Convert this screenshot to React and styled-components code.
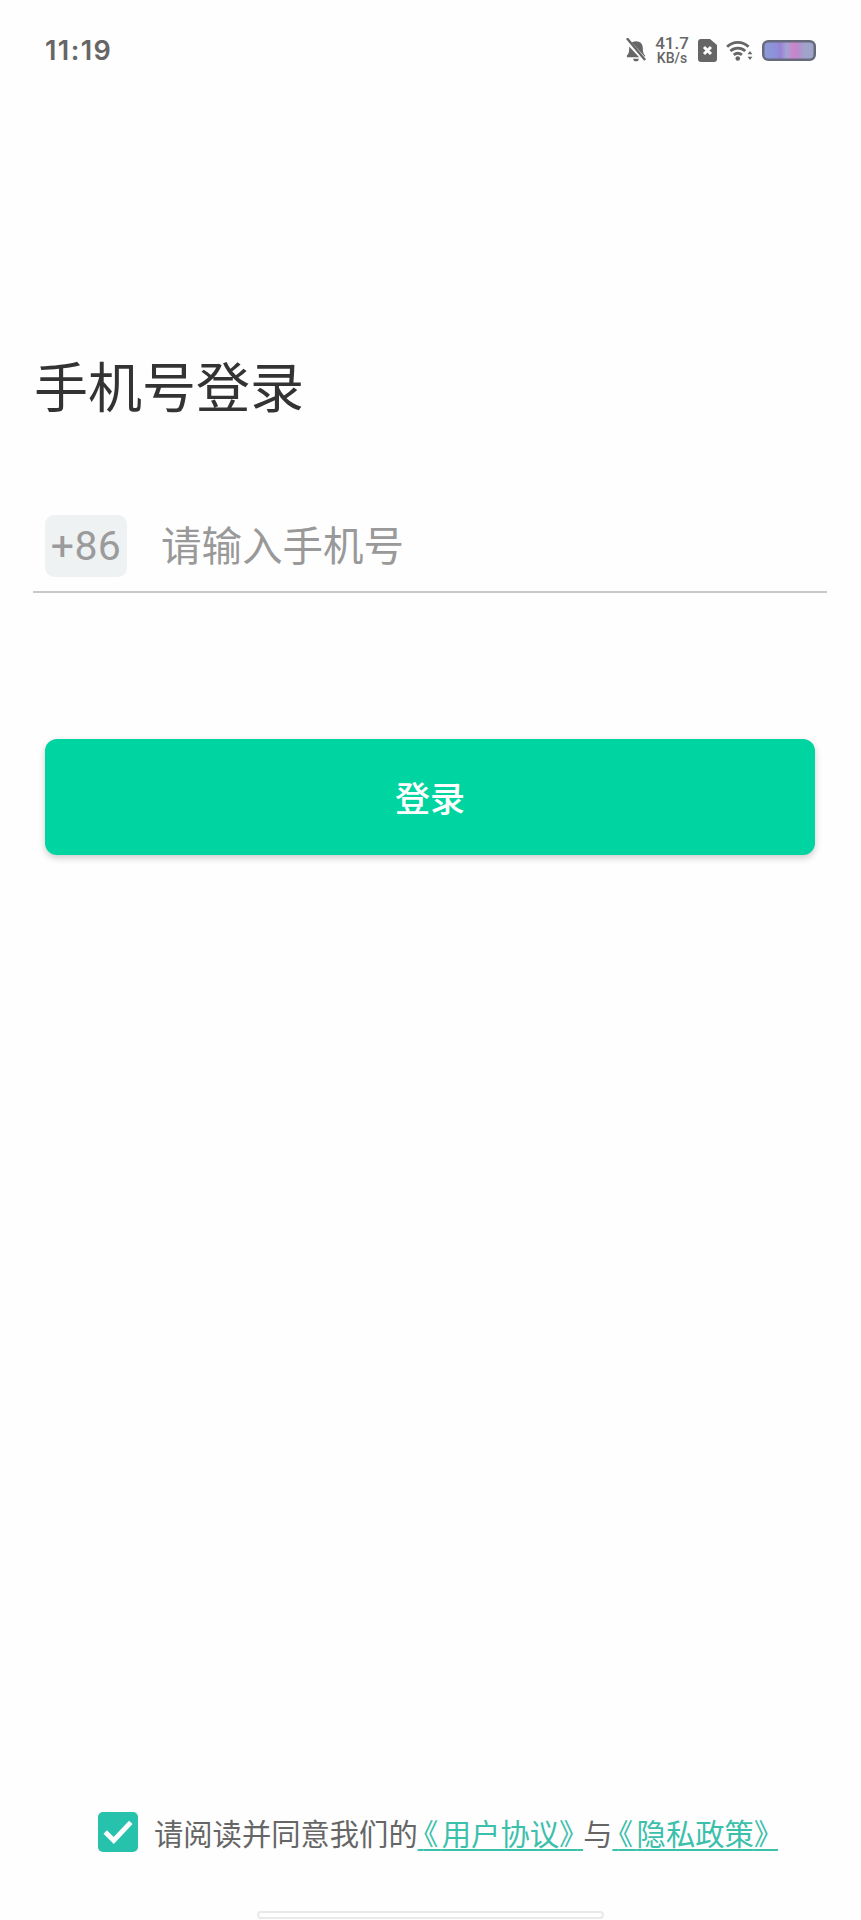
import React from 'react';
import styled, { createGlobalStyle } from 'styled-components';

const GlobalStyle = createGlobalStyle`
  html, body {
    margin: 0;
    padding: 0;
    background: #fff;
  }
  * {
    box-sizing: border-box;
  }
`;

const cjk = `Roboto, "Noto Sans CJK SC", sans-serif`;

const Screen = styled.div`
  width: 861px;
  height: 1920px;
  display: flex;
  flex-direction: column;
  background: #fefefe;
  font-family: ${cjk};
  overflow: hidden;
`;

const StatusBar = styled.div`
  height: 100px;
  padding: 0 45px 0 45px;
  display: flex;
  align-items: center;
  justify-content: space-between;
  color: #666;
`;

const Time = styled.div`
  font-family: Inter, sans-serif;
  font-size: 27px;
  font-weight: 600;
  letter-spacing: 1.4px;
`;

const StatusIcons = styled.div`
  display: flex;
  align-items: center;
  gap: 9px;
`;

const Speed = styled.div`
  width: 34px;
  display: flex;
  flex-direction: column;
  align-items: center;
  font-family: Roboto, sans-serif;
  font-weight: 500;
  span:first-child {
    font-size: 17px;
    line-height: 16px;
  }
  span:last-child {
    font-size: 14px;
    line-height: 14px;
  }
`;

const Title = styled.h1`
  margin: 258px 0 0 34px;
  font-size: 54px;
  line-height: 64px;
  font-weight: 400;
  color: #333;
`;

const PhoneRow = styled.div`
  margin: 93px 34px 0 33px;
  height: 78px;
  padding: 0 12px 15px;
  display: flex;
  align-items: center;
  gap: 34px;
  border-bottom: 2px solid #c9c9c9;
`;

const Prefix = styled.div`
  width: 82px;
  height: 62px;
  display: flex;
  align-items: center;
  justify-content: center;
  border-radius: 9px;
  background: #eff2f3;
  color: #9b9b9b;
  font-size: 41px;
  letter-spacing: 0.4px;
`;

const Placeholder = styled.div`
  margin-bottom: 4px;
  font-size: 40.5px;
  color: #999;
`;

const LoginButton = styled.button`
  margin: 146px 46px 0 45px;
  height: 116px;
  padding-bottom: 2px;
  border: 0;
  border-radius: 12px;
  background: #00d4a0;
  color: #fff;
  font-family: ${cjk};
  font-size: 35px;
  font-weight: 500;
  box-shadow: 0 3px 7px rgba(0, 0, 0, 0.2);
`;

const Agreement = styled.div`
  margin-top: auto;
  height: 40px;
  padding-left: 98px;
  display: flex;
  align-items: center;
  font-size: 29.3px;
  color: #666;
  white-space: nowrap;
`;

const CheckBox = styled.div`
  width: 40px;
  height: 40px;
  margin-right: 16px;
  display: flex;
  align-items: center;
  justify-content: center;
  border-radius: 5px;
  background: #26c2ac;
`;

const Link = styled.span`
  color: #3bc0ab;
  text-decoration: underline;
  text-underline-offset: 4px;
  text-decoration-thickness: 2px;
`;

// the book-title brackets sit tighter here than the font's full-width ones
const Bracket = styled.span`
  font-feature-settings: "halt";
  letter-spacing: 3.5px;
`;

const HomeBar = styled.div`
  width: 347px;
  height: 8px;
  margin: 59px 0 1px 257px;
  border: 2px solid #e9e9e9;
  border-radius: 4px;
`;

function BellOff() {
  return (
    <svg width="20" height="24" viewBox="0 0 22 26">
      <path fill="#666" d="M1 19c2-2 2.500-4 2.500-8 0-4.500 3-7.500 7.500-7.500s7.500 3 7.500 7.500c0 4 .5 6 2.500 8v2H1z" />
      <path fill="#666" d="M8 22.500h6a3 3 0 0 1-6 0z" />
      <path stroke="#fefefe" strokeWidth="5" d="M0 1.500l22 24" />
      <path stroke="#666" strokeWidth="2.600" d="M1 0l20 24" />
    </svg>
  );
}

function SimOff() {
  return (
    <svg width="19" height="23" viewBox="0 0 19 23">
      <path fill="#666" d="M3 0h9l7 6v14a3 3 0 0 1-3 3H3a3 3 0 0 1-3-3V3a3 3 0 0 1 3-3z" />
      <path stroke="#fff" strokeWidth="3" d="M6 8l7 7M13 8l-7 7" />
    </svg>
  );
}

function Wifi() {
  return (
    <svg width="27" height="21" viewBox="0 0 28 22" fill="none">
      <path stroke="#666" strokeWidth="3" d="M1 7C7.500 1 17 1 23.500 7" />
      <path stroke="#666" strokeWidth="3" d="M4.500 11.500c4.500-4 11-4 15.500 0" />
      <path stroke="#666" strokeWidth="3" d="M8 15.500c2.500-2 6-2 8.500 0" />
      <circle cx="12.200" cy="19.300" r="2.400" fill="#666" />
      <path fill="#666" d="M25 11.500l2.500 3.500h-5zM25 21l-2.500-3.500h5z" />
    </svg>
  );
}

function Battery() {
  return (
    <svg width="54" height="21" viewBox="0 0 54 21">
      <defs>
        <linearGradient id="batteryFill">
          <stop offset="0" stopColor="#8b9bd8" />
          <stop offset="0.25" stopColor="#8d90d8" />
          <stop offset="0.33" stopColor="#9a7fd6" />
          <stop offset="0.45" stopColor="#a3a3d6" />
          <stop offset="0.6" stopColor="#cf83c8" />
          <stop offset="0.68" stopColor="#b78ccb" />
          <stop offset="0.8" stopColor="#a0a4cb" />
          <stop offset="1" stopColor="#a0a4c6" />
        </linearGradient>
      </defs>
      <rect x="1.250" y="1.250" width="51.500" height="18.500" rx="5" fill="url(#batteryFill)" stroke="#666a7a" strokeWidth="2.500" />
    </svg>
  );
}

function Check() {
  return (
    <svg width="32" height="26" viewBox="0 0 30 24" fill="none">
      <path stroke="#fff" strokeWidth="4.600" d="M3 12l8 8L27 3" />
    </svg>
  );
}

function BookTitle({ children }) {
  return (
    <Link>
      {'\u2009'}
      <Bracket>《</Bracket>
      {children}
      <Bracket>》</Bracket>
      {'\u2009'}
    </Link>
  );
}

export default function App() {
  return (
    <Screen>
      <GlobalStyle />
      <StatusBar>
        <Time>11:19</Time>
        <StatusIcons>
          <BellOff />
          <Speed>
            <span>41.7</span>
            <span>KB/s</span>
          </Speed>
          <SimOff />
          <Wifi />
          <Battery />
        </StatusIcons>
      </StatusBar>
      <Title>手机号登录</Title>
      <PhoneRow>
        <Prefix>+86</Prefix>
        <Placeholder>请输入手机号</Placeholder>
      </PhoneRow>
      <LoginButton>登录</LoginButton>
      <Agreement>
        <CheckBox>
          <Check />
        </CheckBox>
        请阅读并同意我们的
        <BookTitle>用户协议</BookTitle>
        与
        <BookTitle>隐私政策</BookTitle>
      </Agreement>
      <HomeBar />
    </Screen>
  );
}
